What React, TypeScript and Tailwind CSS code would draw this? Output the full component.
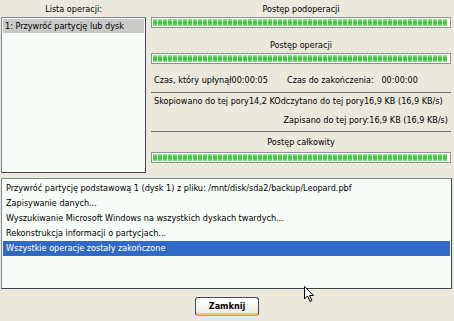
import React from 'react';

const font = { fontFamily: '"DejaVu Sans Condensed", "DejaVu Sans", "Noto Sans", sans-serif' };

function ProgressBar() {
  const segments = Array.from({ length: 59 });
  return (
    <div className="h-[11px] w-full border border-[#8e9396] bg-white p-px">
      <div className="flex h-full gap-px overflow-hidden">
        {segments.map((_, i) => (
          <div
            key={i}
            className="h-full w-[4px] shrink-0 bg-gradient-to-b from-[#8ce88c] via-[#2ec22e] to-[#7ede7e]"
          />
        ))}
      </div>
    </div>
  );
}

const logLines = [
  'Przywróć partycję podstawową 1 (dysk 1) z pliku: /mnt/disk/sda2/backup/Leopard.pbf',
  'Zapisywanie danych...',
  'Wyszukiwanie Microsoft Windows na wszystkich dyskach twardych...',
  'Rekonstrukcja informacji o partycjach...',
  'Wszystkie operacje zostały zakończone',
];

export default function App() {
  return (
    <div
      className="relative flex h-[321px] w-[454px] flex-col overflow-hidden bg-[#ebe9dc] text-[9px] leading-[11px] text-black"
      style={font}
    >
      <div className="flex h-[173px] gap-[5px] pl-px">
        <div className="flex w-[145px] flex-col">
          <div className="flex h-[17px] items-center justify-center pt-[1px]">Lista operacji:</div>
          <div className="flex-1 border border-[#7f8a96] border-b-[#3d4650] border-r-[#3d4650] bg-[#f8fcf9] p-px">
            <div className="flex h-[14px] items-center whitespace-nowrap bg-[#c9c9c7] px-[2px]">1: Przywróć partycję lub dysk</div>
          </div>
        </div>

        <div className="flex w-[300px] flex-col whitespace-nowrap">
          <div className="flex h-[17px] items-center justify-center pt-[1px]">Postęp podoperacji</div>
          <ProgressBar />
          <div className="flex h-[25px] items-end justify-center pb-[2px]">Postęp operacji</div>
          <ProgressBar />
          <div className="flex h-[22px] items-end pl-[3px]">
            <span className="w-[133px]">Czas, który upłynął00:00:05</span>
            <span>Czas do zakończenia:&nbsp;&nbsp;&nbsp;00:00:00</span>
          </div>
          <div className="mt-[6px] h-px bg-[#6f6f6a]" />
          <div className="flex h-[14px] items-end pl-[3px]">
            <span>Skopiowano do tej pory14,2 KOdczytano do tej pory16,9 KB (16,9 KB/s)</span>
          </div>
          <div className="flex h-[19px] items-end justify-end pr-[3px]">
            Zapisano do tej pory:16,9 KB (16,9 KB/s)
          </div>
          <div className="mt-[5px] h-px bg-[#6f6f6a]" />
          <div className="flex h-[18px] items-center justify-center pt-[2px]">Postęp całkowity</div>
          <div className="mt-[2px]">
            <ProgressBar />
          </div>
        </div>
      </div>

      <div className="mx-px mt-[5px] h-[111px] w-[451px] border border-[#7f8a96] border-b-[#3d4650] border-r-[#3d4650] bg-[#f8fcf9] px-px pt-[2px]">
        {logLines.map((line, i) => (
          <div
            key={i}
            className={
              i === logLines.length - 1
                ? 'flex h-[15px] items-center whitespace-nowrap bg-[#316ac5] px-[3px] text-white'
                : 'flex h-[15px] items-center whitespace-nowrap px-[3px]'
            }
          >
            {line}
          </div>
        ))}
      </div>

      <div className="flex flex-1 items-start justify-center pt-[8px]">
        <button
          type="button"
          className="h-[19px] w-[64px] rounded-[3px] border border-[#3c4a5a] border-b-[#e59c2b] bg-gradient-to-b from-white to-[#ecebe5] text-[9px] font-bold text-black shadow-[inset_0_-2px_0_#f5c46a]"
          style={font}
        >
          Zamknij
        </button>
      </div>

      <svg className="absolute left-[304px] top-[286px]" width="11" height="17" viewBox="0 0 11 17">
        <path d="M0.5 0.5 L0.5 13 L3.5 10 L6 15.5 L8 14.5 L5.5 9.5 L9.5 9.5 Z" fill="white" stroke="black" strokeWidth="1" />
      </svg>
    </div>
  );
}
